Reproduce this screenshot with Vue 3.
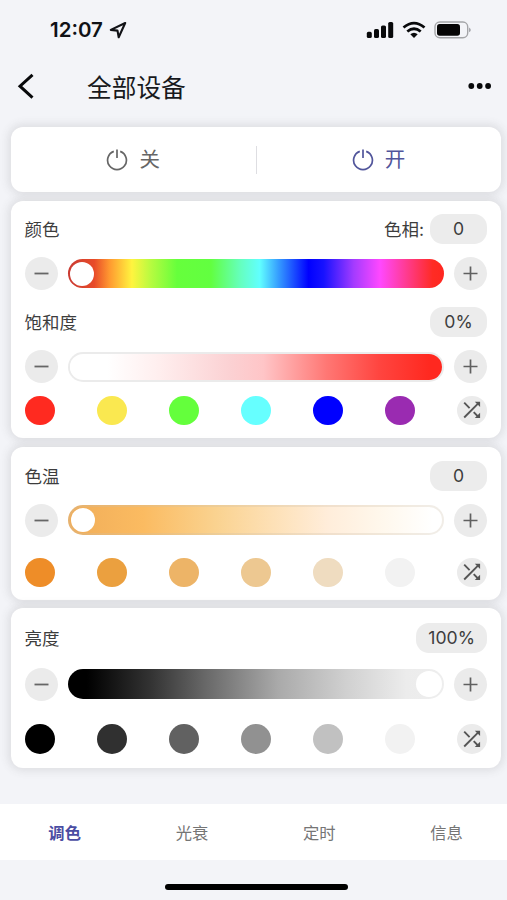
<script setup>
import { ref } from 'vue'

const cards = [
  {
    id: 'color',
    controls: [
      { label: '颜色', prefix: '色相:', value: '0', track: 'hue', knob: 'start' },
      { label: '饱和度', value: '0%', track: 'saturation', knob: 'start' },
    ],
    swatches: ['#ff2a20', '#fae850', '#64ff3c', '#66ffff', '#0000ff', '#9a2bb1'],
  },
  {
    id: 'temperature',
    controls: [{ label: '色温', value: '0', track: 'warmth', knob: 'start' }],
    swatches: ['#ee8d28', '#eba03f', '#edb467', '#edc891', '#efdcc0', '#f2f2f2'],
  },
  {
    id: 'brightness',
    controls: [{ label: '亮度', value: '100%', track: 'luminance', knob: 'end' }],
    swatches: ['#000000', '#303030', '#616161', '#919191', '#c1c1c1', '#f2f2f2'],
  },
]
const tabs = ['调色', '光衰', '定时', '信息']
const active = ref(0)
</script>

<template>
  <div class="screen">
    <header class="status">
      <div class="clock">
        <span>12:07</span>
        <svg width="18" height="18" viewBox="0 0 18 18"><path d="M16.2 2 1.8 8.9 8.5 9.6 9.7 16.2Z" fill="none" stroke="#111216" stroke-width="2.1" stroke-linejoin="round" /></svg>
      </div>
      <div class="signals">
        <svg width="28" height="18" viewBox="0 0 28 18" fill="#08090b">
          <rect x="0.8" y="10.8" width="5" height="6.2" rx="1.6" />
          <rect x="8" y="8" width="5" height="9" rx="1.6" />
          <rect x="15" y="4.5" width="5" height="12.5" rx="1.6" />
          <rect x="22.2" y="1" width="5" height="16" rx="1.6" />
        </svg>
        <svg class="wifi" width="24" height="18" viewBox="0 0 24 18" fill="none" stroke="#08090b" stroke-width="2.8">
          <path d="M1.5 6.5Q12-2.3 22.5 6.5" />
          <path d="M5.3 10.5Q12 5 18.7 10.5" />
          <path d="m8.3 13.3 3.7 3.7 3.7-3.7Q12 10.3 8.3 13.3Z" fill="#08090b" stroke="none" />
        </svg>
        <svg class="battery" width="38" height="18" viewBox="0 0 38 18">
          <rect x="1" y="1" width="32.7" height="15.7" rx="4.8" fill="none" stroke="#a4a5a8" stroke-width="1.4" />
          <rect x="3" y="3" width="23" height="11.7" rx="2.7" fill="#050505" />
          <path d="M35.2 6.5q3 2.4 0 4.8Z" fill="#94959a" />
        </svg>
      </div>
    </header>

    <nav class="nav">
      <svg class="back" width="20" height="28" viewBox="0 0 20 28"><path d="M18.5 2.8 6 14.2 18.5 25.6" fill="none" stroke="#08090b" stroke-width="3" /></svg>
      <h1>全部设备</h1>
      <svg class="more" width="24" height="8" viewBox="0 0 24 8" fill="#08090b"><circle cx="3.3" cy="4" r="2.9" /><circle cx="11.7" cy="4" r="2.9" /><circle cx="20.1" cy="4" r="2.9" /></svg>
    </nav>

    <main class="cards">
      <section class="card power">
        <button v-for="(name, i) in ['关', '开']" :key="name" :class="{ on: i === 1 }">
          <svg width="22" height="22" viewBox="0 0 22 22" fill="none" stroke="currentColor" stroke-width="1.7"><path d="M7.8 2.4A9.4 9.4 0 1 0 14.2 2.4M11 .5V9" /></svg>
          <span>{{ name }}</span>
        </button>
      </section>

      <section v-for="card in cards" :key="card.id" class="card" :class="card.id">
        <div v-for="c in card.controls" :key="c.label" class="control">
          <div class="heading">
            <span class="label">{{ c.label }}</span>
            <span v-if="c.prefix" class="prefix">{{ c.prefix }}</span>
            <span class="pill">{{ c.value }}</span>
          </div>
          <div class="slider">
            <button class="step"><svg width="15" height="15" viewBox="0 0 15 15"><path d="M.5 7.5h14" stroke="#666" stroke-width="1.8" /></svg></button>
            <div class="track" :class="[c.track, c.knob]"><i class="knob"></i></div>
            <button class="step"><svg width="15" height="15" viewBox="0 0 15 15"><path d="M.5 7.5h14M7.5.5v14" stroke="#606060" stroke-width="1.7" /></svg></button>
          </div>
        </div>
        <div class="swatches">
          <button v-for="s in card.swatches" :key="s" class="swatch" :style="{ background: s }"></button>
          <button class="swatch shuffle">
            <svg width="18" height="18" viewBox="0 0 18 18" fill="none" stroke="#555" stroke-width="1.9"><path d="M1.2 16.5 15.5 2.2M1.2 1.7 6.6 7.1M10.7 11.2 15.5 16" /><path d="M11.8.8H17.1V6.1ZM17.1 11.7V17H11.8Z" fill="#555" stroke="none" /></svg>
          </button>
        </div>
      </section>
    </main>

    <footer class="tabs">
      <button v-for="(tab, i) in tabs" :key="tab" :class="{ active: i === active }" @click="active = i">{{ tab }}</button>
    </footer>
    <div class="home"><i></i></div>
  </div>
</template>

<style>
body { margin: 0; background: #f3f4f8; overflow: hidden; }
</style>

<style scoped>
* { box-sizing: border-box; }
.screen {
  height: 900px;
  display: flex;
  flex-direction: column;
  background: #f3f4f8;
  color: #3d3d3d;
  font-family: Inter, "Noto Sans CJK SC", sans-serif;
}
button { border: 0; padding: 0; background: none; font: inherit; color: inherit; }
svg { display: block; flex: none; }
.status { height: 60px; padding: 0 35px 0 50px; display: flex; align-items: center; justify-content: space-between; }
.clock { display: flex; align-items: center; gap: 6px; color: #101115; font-size: 20.5px; font-weight: 600; padding-bottom: 1px; }
.signals { display: flex; align-items: center; padding-bottom: 1px; }
.wifi { margin-left: 8px; }
.battery { margin-left: 8px; }
.nav { height: 67px; padding: 0 15px 15px 14px; display: flex; align-items: center; color: #18191c; }
h1 { margin: 0 auto 0 53px; padding-bottom: 1px; font-size: 24.7px; line-height: 36px; font-weight: 400; font-family: "Noto Sans CJK SC", sans-serif; }
.cards { padding: 0 6px 0 10.5px; height: 677px; display: flex; flex-direction: column; }
.card { background: #fff; border-radius: 12px; box-shadow: 0 0 9px 3px rgba(70, 72, 75, .12); padding: 13px 14px 0; flex: none; }
.power { height: 65px; padding: 0; display: flex; margin-bottom: 9px; }
.power button { flex: 1; display: flex; align-items: center; justify-content: center; gap: 11px; color: #666; font-size: 20.5px; line-height: 30px; }
.power span { padding-top: 1px; }
.power button + button { color: #51559b; position: relative; }
.power button + button::before { content: ""; position: absolute; left: 0; top: 19px; height: 28px; width: 1px; background: #dedee2; }
.color { height: 237px; margin-bottom: 9px; }
.temperature { height: 153px; margin-bottom: 8px; padding-top: 13.5px; }
.brightness { height: 160px; padding-top: 15px; }
.control + .control { margin-top: 17px; }
.heading { height: 30px; display: flex; align-items: center; font-size: 17.5px; line-height: 28px; }
.label { margin-right: auto; padding-top: 2px; }
.prefix { margin-right: 6px; padding-top: 2px; }
.pill { min-width: 57px; height: 30px; padding: 0 12px; border-radius: 13px; background: #ececec; text-align: center; line-height: 30px; font-size: 17.6px; }
.slider { height: 33px; margin-top: 13px; display: flex; align-items: center; gap: 10.5px; }
.brightness .slider { margin-top: 14.5px; }
.step { width: 33px; height: 33px; border-radius: 50%; background: #ebebeb; display: flex; align-items: center; justify-content: center; flex: none; }
.track { flex: 1; height: 30px; border-radius: 15px; border: 2px solid #ebebeb; display: flex; align-items: center; background-origin: border-box; }
.track.end { justify-content: flex-end; }
.knob { width: 24px; height: 24px; border-radius: 50%; background: #fff; }
.hue { height: 29px; margin: 0 -.5px; border: 0; padding-left: 2.5px; background: linear-gradient(90deg, #c93a32 0, #e84b29 7%, #ff9830 11%, #fff43f 17%, #b7fb40 22%, #66ff3c 29%, #62ff40 38%, #65ffc0 46%, #61ffff 51%, #359cff 56%, #0000ff 64%, #1712ff 68%, #a43bff 76%, #ff48ff 83%, #ff3b90 90%, #ff2b24 97%, #ff2720 100%); }
.saturation { border-color: rgba(130, 130, 130, .16); background: linear-gradient(90deg, #fff 10%, #ffeeee 24%, #fbd1d3 43%, #ffc5c7 52%, #ff7774 69%, #ff4540 83%, #ff281f 97%); background-clip: padding-box; }
.warmth { padding-left: 1px; border-color: rgba(206, 190, 168, .28); background-image: linear-gradient(90deg, #f0ad59 0, #fbbb61 20%, #fad28f 39%, #fde0b5 54%, #ffedda 69%, #fff8ed 84%, #fff 97%); }
.luminance { border: 0; padding-right: 2px; background-image: linear-gradient(90deg, #000 5%, #333 22%, #666 36%, #aaa 56%, #d0d0d0 74%, #ececec 90%, #eeeeee 100%); }
.luminance .knob { width: 26px; height: 26px; }
.swatches { display: flex; justify-content: space-between; margin-top: 12.5px; }
.temperature .swatches { margin-top: 21px; }
.brightness .swatches { margin-top: 23.5px; }
.swatch { width: 30px; height: 30px; border-radius: 50%; }
.color .swatch, .temperature .swatch { height: 29.5px; }
.shuffle { background: #ebebeb; display: flex; align-items: center; justify-content: center; }
.tabs { height: 56px; padding: 0 0 1px 1px; background: #fff; display: grid; grid-template-columns: repeat(4, 127.3px); color: #757575; font-size: 16.3px; }
.tabs .active { color: #4b4da3; font-weight: 700; }
.home { height: 40px; padding: 24px 0 0 5px; display: flex; justify-content: center; }
.home i { width: 183px; height: 6px; border-radius: 3px; background: #000; }
</style>
